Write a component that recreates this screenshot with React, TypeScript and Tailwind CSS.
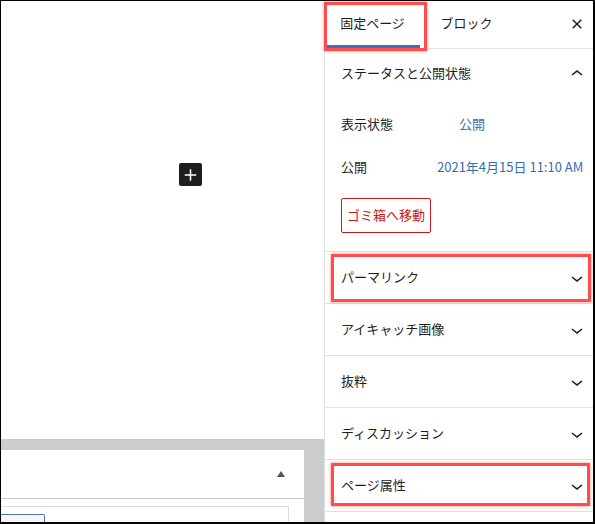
import React from "react";

const ChevronDown = () => (
  <svg width="24" height="24" viewBox="0 0 24 24" className="fill-[#1e1e1e]">
    <path d="M17.5 11.6L12 16l-5.5-4.4.9-1.2L12 14l4.5-3.6 1 1.2z" />
  </svg>
);

const ChevronUp = () => (
  <svg width="24" height="24" viewBox="0 0 24 24" className="fill-[#1e1e1e]">
    <path d="M6.5 12.4L12 8l5.5 4.4-.9 1.2L12 10l-4.5 3.6-1-1.2z" />
  </svg>
);

const CloseIcon = () => (
  <svg width="24" height="24" viewBox="0 0 24 24" className="fill-[#1e1e1e]">
    <path d="M12 13.06l3.712 3.713 1.061-1.06L13.061 12l3.712-3.712-1.06-1.06L12 10.938 8.288 7.227l-1.061 1.06L10.939 12l-3.712 3.712 1.06 1.061L12 13.061z" />
  </svg>
);

const PlusIcon = () => (
  <svg width="24" height="24" viewBox="0 0 24 24" className="fill-white">
    <path d="M18 11.2h-5.2V6h-1.6v5.2H6v1.6h5.2V18h1.6v-5.2H18z" />
  </svg>
);

const Row = ({ label, highlight }: { label: string; highlight?: "perma" | "attr" }) => (
  <div className="relative flex h-[52px] items-center justify-between border-b border-[#e0e0e0] pl-4 pr-[4px]">
    <span className="-mt-[2px]">{label}</span>
    <ChevronDown />
    {highlight === "perma" && (
      <div className="pointer-events-none absolute left-[6px] right-[2px] top-[2px] bottom-[1px] border-[3px] border-[#ff4d4d] shadow-[0_0_3px_rgba(255,60,60,0.6)]" />
    )}
    {highlight === "attr" && (
      <div className="pointer-events-none absolute left-[6px] right-[3px] top-[3px] bottom-[5px] border-[3px] border-[#ff4d4d] shadow-[0_0_3px_rgba(255,60,60,0.6)]" />
    )}
  </div>
);

export default function App() {
  return (
    <div
      className="flex h-[524px] w-[595px] overflow-hidden border-l border-t border-b-2 border-r-2 border-black bg-white text-[13px] text-[#1e1e1e]"
      style={{ fontFamily: '"Noto Sans CJK JP", "Noto Sans", sans-serif' }}
    >
      {/* Left editor canvas */}
      <div className="flex w-[323px] flex-col overflow-hidden">
        <div className="h-[438px] shrink-0 pl-[178px] pt-[162px]">
          <div className="flex h-[23px] w-[23px] items-center justify-center rounded-[2px] bg-[#1e1e1e]">
            <PlusIcon />
          </div>
        </div>
        <div className="min-h-0 flex-1 overflow-hidden bg-[#cccccc] pr-[20px] pt-[11px]">
          <div className="h-full bg-white">
            <div className="flex h-[49px] items-center justify-end border-b border-[#c8c8c8] pr-[19px]">
              <div className="h-0 w-0 border-x-[4px] border-b-[6px] border-x-transparent border-b-[#555]" />
            </div>
            <div className="mr-[15px] mt-[7px] h-[40px] border-r border-t border-[#dcdcdc] pt-[7px]">
              <div className="h-[30px] w-[44px] rounded-tr-[2px] border-r border-t border-[#4a76bd] bg-[#f7f7f7]" />
            </div>
          </div>
        </div>
      </div>

      {/* Sidebar */}
      <div className="flex flex-1 flex-col border-l border-[#e0e0e0]">
        {/* Tabs header */}
        <div className="relative flex h-[48px] items-stretch border-b border-[#e0e0e0]">
          <div className="relative flex w-[95px] items-center justify-center pb-[4px]">
            <span>固定ページ</span>
            <div className="absolute bottom-0 left-0 right-0 h-[3px] bg-[#3f71b7]" />
          </div>
          <div className="flex w-[93px] items-center justify-center pb-[4px]">
            <span>ブロック</span>
          </div>
          <div className="ml-auto flex items-center pb-[2px] pr-[4px]">
            <CloseIcon />
          </div>
          <div className="pointer-events-none absolute left-[-1px] top-[1px] h-[49px] w-[103px] border-[3px] border-[#ff4d4d] shadow-[0_0_3px_rgba(255,60,60,0.6)]" />
        </div>

        {/* Status section */}
        <div className="flex flex-col border-b border-[#e0e0e0]">
          <div className="flex h-[50px] items-center justify-between pl-4 pr-[4px]">
            <span className="-mt-[2px]">ステータスと公開状態</span>
            <ChevronUp />
          </div>
          <div className="flex h-[52px] items-center pl-4">
            <span className="-mt-[2px] w-[118px]">表示状態</span>
            <span className="-mt-[2px] text-[#3a6cb4]">公開</span>
          </div>
          <div className="flex h-[34px] items-center pl-4">
            <span className="-mt-[2px] w-[96px]">公開</span>
            <span className="-mt-[2px] text-[#3a6cb4]">2021年4月15日 11:10 AM</span>
          </div>
          <div className="pb-[18px] pl-4 pt-[13px]">
            <div className="flex h-[35px] w-[90px] items-center justify-center rounded-[2px] border border-[#cc1818] pb-[2px] text-[#cc1818]">
              ゴミ箱へ移動
            </div>
          </div>
        </div>

        <Row label="パーマリンク" highlight="perma" />
        <Row label="アイキャッチ画像" />
        <Row label="抜粋" />
        <Row label="ディスカッション" />
        <Row label="ページ属性" highlight="attr" />
      </div>
    </div>
  );
}
